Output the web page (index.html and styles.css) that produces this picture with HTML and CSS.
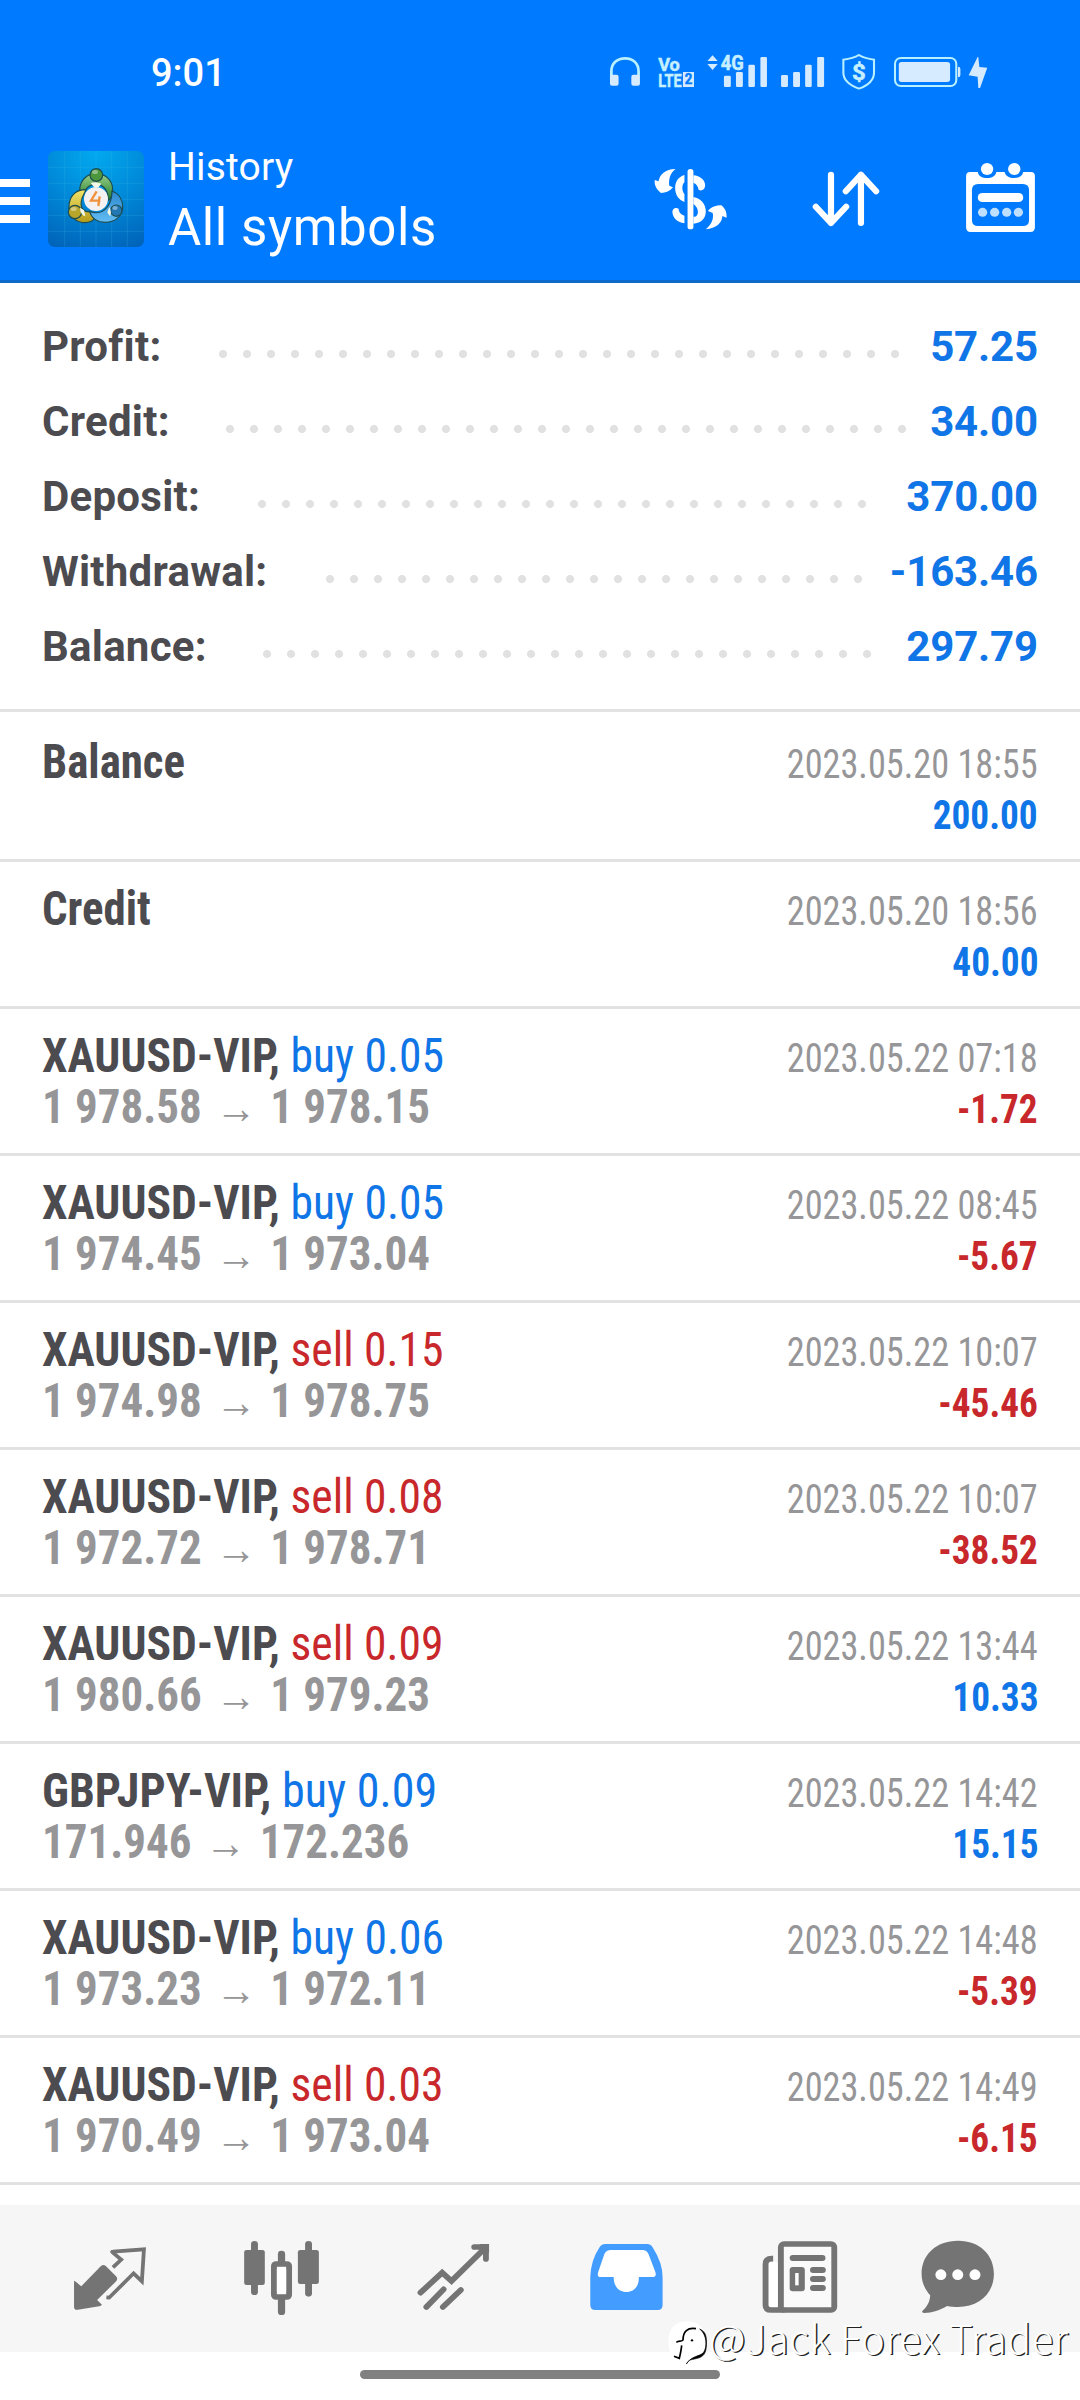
FILE: index.html
```html
<!DOCTYPE html>
<html lang="en">
<head>
<meta charset="utf-8">
<title>History</title>
<link rel="stylesheet" href="styles.css">
</head>
<body>
<div class="screen">
  <header class="top">
    <div class="status">
      <span class="clock">9:01</span>
      <svg class="status-icons" viewBox="174 54 1162 132" preserveAspectRatio="none">
        <g fill="none" stroke="#b9f0ff" stroke-width="8">
          <path d="M207 140V124C207 100 224 85 247 85S286 100 286 124V140"/>
          <path d="M926 75C912 84 898 87 881 89V128C881 152 900 166 926 176C952 166 970 152 970 128V89C953 87 940 84 926 75Z" stroke-width="6"/>
          <rect x="1031" y="84" width="178" height="84" rx="17" stroke-width="6"/>
        </g>
        <g fill="#d6ebff">
          <rect x="203" y="134" width="25" height="33" rx="6"/><rect x="265" y="134" width="25" height="33" rx="6"/>
          <path d="M486 93L501 76L516 93ZM486 102L501 120L516 102Z"/>
          <rect x="534" y="137" width="20" height="34" rx="4"/><rect x="569" y="126" width="20" height="45" rx="4"/><rect x="605" y="104" width="19" height="67" rx="4"/><rect x="640" y="81" width="19" height="90" rx="4"/>
          <rect x="700" y="135" width="20" height="36" rx="4"/><rect x="735" y="126" width="20" height="45" rx="4"/><rect x="770" y="104" width="19" height="67" rx="4"/><rect x="805" y="81" width="20" height="90" rx="4"/>
          <rect x="1042" y="96" width="149" height="60" rx="8"/>
          <path d="M1214 110Q1221 110 1221 117V135Q1221 142 1214 142Z"/>
          <path d="M1271 81L1245 136L1271 140L1273 174H1278L1299 113L1276 111L1273 81Z"/>
          <rect x="415" y="126" width="32" height="45"/>
        </g>
        <g class="glyphs">
          <text x="343" y="122" font-size="57" textLength="63" lengthAdjust="spacingAndGlyphs">Vo</text>
          <text x="343" y="170" font-size="57" textLength="68" lengthAdjust="spacingAndGlyphs">LTE</text>
          <text x="420" y="163" font-size="42" textLength="22" lengthAdjust="spacingAndGlyphs" class="knock">2</text>
          <text x="525" y="121" font-size="63" textLength="67" lengthAdjust="spacingAndGlyphs">4G</text>
          <text x="906" y="149" font-size="64" textLength="40" lengthAdjust="spacingAndGlyphs">$</text>
        </g>
      </svg>
    </div>
    <div class="toolbar">
      <div class="menu"><i></i><i></i><i></i></div>
      <svg class="app" viewBox="54 62 288 288" preserveAspectRatio="none">
        <defs>
          <radialGradient id="bg" cx=".5" cy="0" r="1.1"><stop offset="0" stop-color="#02aaf0"/><stop offset=".5" stop-color="#0089d8"/><stop offset="1" stop-color="#0062b8"/></radialGradient>
          <linearGradient id="gr" x1="0" y1="0" x2="0" y2="1"><stop offset="0" stop-color="#9bd08a"/><stop offset="1" stop-color="#1f7d2c"/></linearGradient>
          <linearGradient id="ye" x1="0" y1="0" x2="0" y2="1"><stop offset="0" stop-color="#f3e468"/><stop offset="1" stop-color="#b39a1b"/></linearGradient>
          <linearGradient id="bl" x1="0" y1="0" x2="0" y2="1"><stop offset="0" stop-color="#2b86d0"/><stop offset="1" stop-color="#63bdf2"/></linearGradient>
        </defs>
        <rect x="54" y="62" width="288" height="288" rx="20" fill="url(#bg)"/>
        <path d="M104 62V350M151 62V350M198 62V350M245 62V350M292 62V350M54 111H342M54 159H342M54 207H342M54 255H342M54 303H342" stroke="#48bdf0" stroke-opacity=".2" stroke-width="3"/>
        <g stroke="#1d4c50" stroke-width="3.5">
          <path d="M149 180C150 148 172 130 199 130C228 130 248 152 248 178C248 196 240 208 234 210C236 180 220 162 198 162C182 162 170 170 164 184Z" fill="url(#gr)"/>
          <path d="M168 178C132 178 117 202 117 230C117 258 138 277 166 277C180 276 188 272 192 266L180 245C158 245 148 230 156 204Z" fill="url(#ye)"/>
          <path d="M246 182C268 190 278 210 278 230C276 260 254 276 226 276C202 276 186 266 178 243C202 252 218 248 232 230C244 214 246 200 246 182Z" fill="url(#bl)"/>
          <circle cx="199" cy="134" r="19" fill="#4c963d"/>
          <circle cx="135" cy="245" r="20" fill="#b8a62a"/>
          <circle cx="259" cy="241" r="17" fill="#2378b4"/>
        </g>
        <g fill="#fff" fill-opacity=".4"><ellipse cx="195" cy="125" rx="9" ry="6"/><ellipse cx="131" cy="236" rx="9" ry="6"/><ellipse cx="255" cy="233" rx="8" ry="6"/></g>
        <path d="M182 158L192 170H206L214 160Q198 152 182 158ZM150 232L162 240L166 258Q150 252 150 232ZM238 230L232 246L240 258Q246 244 238 230Z" fill="#f4f8e8"/>
        <circle cx="198" cy="206" r="36" fill="#f3f1f1"/>
        <path d="M200 183L183 211H211M209 198L205 227" fill="none" stroke="#f0923d" stroke-width="7"/>
      </svg>
      <div class="titles">
        <div class="sub">History</div>
        <div class="main">All symbols</div>
      </div>
      <div class="actions">
        <svg width="80" height="75" viewBox="321 390 232 225" preserveAspectRatio="none">
          <g fill="#fff">
            <rect x="427" y="417" width="17" height="181" rx="8"/>
            <path d="M418 435C400 440 391 456 391 474C391 495 402 510 418 516V493C410 482 410 464 418 456Z"/>
            <path d="M444 436C463 437 478 450 478 466C478 478 468 485 459 479C457 469 452 461 444 459V501C466 505 480 522 480 544C480 566 466 580 444 581V560C451 562 457 556 457 546C457 534 451 528 444 522Z"/>
            <path d="M383 547C382 536 392 530 401 536C401 546 409 554 418 557V580C398 577 385 566 383 547Z"/>
            <path d="M392 417C362 417 346 434 343 454L332 450C330 464 336 478 350 489C364 489 376 483 385 472L374 467C372 448 376 430 392 417Z"/>
            <path d="M480 598C510 594 527 580 528 558L540 563C541 548 537 536 525 526C510 526 496 530 486 543L500 549C503 566 498 582 480 598Z"/>
          </g>
        </svg>
        <svg width="72" height="75" viewBox="787 390 209 225" preserveAspectRatio="none">
          <path d="M845 434V579M801 530L845 579L889 530M932 579V434M888 484L932 434L976 484" fill="none" stroke="#fff" stroke-width="18" stroke-linecap="round" stroke-linejoin="round"/>
        </svg>
        <svg width="75" height="75" viewBox="1228 390 218 225" preserveAspectRatio="none">
          <path fill="#fff" fill-rule="evenodd" d="M1249 426H1271C1273 438 1283 444 1298 444S1322 438 1325 426H1349C1352 438 1362 444 1377 444S1401 438 1403 426H1425Q1437 426 1437 438V592Q1437 606 1424 606H1250Q1237 606 1237 592V438Q1237 426 1249 426ZM1272 462Q1254 462 1254 480V570Q1254 588 1272 588H1402Q1420 588 1420 570V480Q1420 462 1402 462Z"/>
          <g fill="#fff"><circle cx="1298" cy="417" r="18"/><circle cx="1377" cy="417" r="18"/><rect x="1271" y="489" width="132" height="27" rx="13"/></g>
          <g fill="#bfdfff"><circle cx="1285" cy="547" r="13.5"/><circle cx="1320" cy="547" r="13.5"/><circle cx="1355" cy="547" r="13.5"/><circle cx="1389" cy="547" r="13.5"/></g>
        </svg>
      </div>
    </div>
  </header>

  <section class="summary">
    <div class="sum"><span class="label">Profit:</span><span class="dots n29" style="margin-right:23px"></span><span class="value">57.25</span></div>
    <div class="sum"><span class="label">Credit:</span><span class="dots n29" style="margin-right:16px"></span><span class="value">34.00</span></div>
    <div class="sum"><span class="label">Deposit:</span><span class="dots n26" style="margin-right:32px"></span><span class="value">370.00</span></div>
    <div class="sum"><span class="label">Withdrawal:</span><span class="dots n23" style="margin-right:20px"></span><span class="value">-163.46</span></div>
    <div class="sum"><span class="label">Balance:</span><span class="dots n26" style="margin-right:27px"></span><span class="value">297.79</span></div>
  </section>

  <main class="deals">
    <article class="deal first"><div class="line"><span class="name op"><b>Balance</b></span><time>2023.05.20 18:55</time></div><div class="line"><span>&nbsp;</span><strong class="up">200.00</strong></div></article>
    <article class="deal"><div class="line"><span class="name op"><b>Credit</b></span><time>2023.05.20 18:56</time></div><div class="line"><span>&nbsp;</span><strong class="up">40.00</strong></div></article>
    <article class="deal"><div class="line"><span class="name"><b>XAUUSD-VIP,</b> <span class="up">buy 0.05</span></span><time>2023.05.22 07:18</time></div><div class="line"><span class="price">1 978.58<i>→</i>1 978.15</span><strong class="down">-1.72</strong></div></article>
    <article class="deal"><div class="line"><span class="name"><b>XAUUSD-VIP,</b> <span class="up">buy 0.05</span></span><time>2023.05.22 08:45</time></div><div class="line"><span class="price">1 974.45<i>→</i>1 973.04</span><strong class="down">-5.67</strong></div></article>
    <article class="deal"><div class="line"><span class="name"><b>XAUUSD-VIP,</b> <span class="down">sell 0.15</span></span><time>2023.05.22 10:07</time></div><div class="line"><span class="price">1 974.98<i>→</i>1 978.75</span><strong class="down">-45.46</strong></div></article>
    <article class="deal"><div class="line"><span class="name"><b>XAUUSD-VIP,</b> <span class="down">sell 0.08</span></span><time>2023.05.22 10:07</time></div><div class="line"><span class="price">1 972.72<i>→</i>1 978.71</span><strong class="down">-38.52</strong></div></article>
    <article class="deal"><div class="line"><span class="name"><b>XAUUSD-VIP,</b> <span class="down">sell 0.09</span></span><time>2023.05.22 13:44</time></div><div class="line"><span class="price">1 980.66<i>→</i>1 979.23</span><strong class="up">10.33</strong></div></article>
    <article class="deal"><div class="line"><span class="name cross"><b>GBPJPY-VIP,</b> <span class="up">buy 0.09</span></span><time>2023.05.22 14:42</time></div><div class="line"><span class="price">171.946<i>→</i>172.236</span><strong class="up">15.15</strong></div></article>
    <article class="deal"><div class="line"><span class="name"><b>XAUUSD-VIP,</b> <span class="up">buy 0.06</span></span><time>2023.05.22 14:48</time></div><div class="line"><span class="price">1 973.23<i>→</i>1 972.11</span><strong class="down">-5.39</strong></div></article>
    <article class="deal"><div class="line"><span class="name"><b>XAUUSD-VIP,</b> <span class="down">sell 0.03</span></span><time>2023.05.22 14:49</time></div><div class="line"><span class="price">1 970.49<i>→</i>1 973.04</span><strong class="down">-6.15</strong></div></article>
  </main>

  <nav class="tabs">
    <svg viewBox="0 75 522.7 441" preserveAspectRatio="none">
      <path fill="#747474" d="M215 302Q222 306 236 319L291 260Q299 250 308 259L337 289Q344 297 336 305L282 360L296 374Q294 378 288 379L226 389Q215 391 215 380Z"/>
      <path fill="none" stroke="#747474" stroke-width="11" stroke-linejoin="miter" stroke-linecap="butt" d="M328 262L352 239L327 217Q324 215 328 215L418 208L412 304L388 280L317 353L309 352"/>
    </svg>
    <svg viewBox="522.7 75 522.7 441" preserveAspectRatio="none">
      <g fill="#747474">
        <rect x="729" y="183" width="20" height="162" rx="10"/><rect x="709" y="210" width="60" height="105" rx="7"/>
        <rect x="886" y="183" width="20" height="167" rx="10"/><rect x="865" y="210" width="61" height="102" rx="7"/>
        <rect x="807" y="212" width="21" height="60" rx="10"/><rect x="807" y="345" width="21" height="60" rx="10"/>
      </g>
      <rect x="795.5" y="252" width="44" height="99" rx="6" fill="#f6f6f6" stroke="#747474" stroke-width="17"/>
      <rect x="804" y="261" width="27" height="81" rx="8" fill="#fff"/>
    </svg>
    <svg viewBox="1045.3 75 522.7 441" preserveAspectRatio="none">
      <path d="M1221 338L1284 278L1311 303L1402 211M1377 201H1411V237M1288 328L1238 381M1338 330L1286 381" fill="none" stroke="#747474" stroke-width="17" stroke-linecap="round"/>
      <path d="M1393 192H1420V219Z" fill="#747474"/>
    </svg>
    <svg viewBox="0 75 522.7 441" preserveAspectRatio="none">
      <path fill="#439cff" d="M190 192H311Q321 192 327 202Q356 249 356 291V374Q356 390 342 390H161Q146 390 146 374V291Q148 240 173 202Q179 192 190 192Z"/>
      <path fill="#fff" d="M206 210H297Q310 210 315 222L335 276Q339 291 330 291H287C288 318 274 336 251 336S213 318 214 291H175Q165 291 169 276L187 222Q192 210 206 210Z"/>
    </svg>
    <svg viewBox="522.7 75 522.7 441" preserveAspectRatio="none">
      <rect x="663" y="246" width="28" height="135" rx="6" fill="#fff"/>
      <rect x="699.5" y="192" width="155" height="198" rx="9" fill="#fafafa" stroke="#747474" stroke-width="17"/>
      <path d="M677 236H673Q655 236 655 253V374Q655 390 671 390H710" fill="none" stroke="#747474" stroke-width="17"/>
      <g fill="#747474"><rect x="725" y="225" width="104" height="18" rx="9"/><rect x="725" y="261" width="44" height="73" rx="9"/><rect x="784" y="261" width="46" height="18" rx="9"/><rect x="784" y="288" width="46" height="18" rx="9"/><rect x="784" y="315" width="46" height="18" rx="9"/></g>
      <rect x="741" y="279" width="10" height="37" fill="#fff"/>
    </svg>
    <svg viewBox="1045.3 75 522.7 441" preserveAspectRatio="none">
      <path fill="#747474" d="M1214 182C1277 182 1318 224 1318 281C1318 340 1275 381 1214 381C1202 381 1192 380 1182 378C1162 390 1139 399 1115 399Q1105 397 1113 390C1126 378 1132 364 1133 346C1118 328 1108 308 1108 281C1108 224 1150 182 1214 182Z"/>
      <g fill="#fff"><circle cx="1164" cy="284" r="16"/><circle cx="1213" cy="284" r="16"/><circle cx="1263" cy="284" r="16"/></g>
    </svg>
  </nav>
  <div class="home"><span></span></div>

  <div class="credit">
    <svg viewBox="83 364 120 132">
      <path fill="#fff" d="M140 365C176 365 196 386 196 424C196 466 182 478 152 482L140 494L126 482C98 482 84 462 84 424C84 388 104 365 140 365Z"/>
      <path d="M178 388C200 404 201 442 190 458C178 472 156 466 138 493C144 482 150 480 162 478C184 474 196 468 198 440C200 410 196 396 178 388Z" stroke="#000" stroke-width="2"/>
      <path d="M167 387C142 382 128 396 128 421C122 427 116 422 108 428M124 437C123 450 120 462 117 476L101 470" fill="none" stroke="#000" stroke-width="5"/>
      <circle cx="155" cy="422" r="3.5"/>
    </svg>
    <span>@Jack Forex Trader</span>
  </div>
</div>
</body>
</html>
```
FILE: styles.css
```css
* { box-sizing: border-box; }
body { margin: 0; font-family: Roboto, "Liberation Sans", sans-serif; background: #fff; }
svg { display: block; flex: none; }
.screen { position: relative; width: 1080px; height: 2400px; overflow: hidden; background: #fff; }

.top { height: 283px; background: #007aff; border-bottom: 3px solid #0f69c9; color: #fff; }
.status { display: flex; justify-content: space-between; height: 140px; padding: 48px 80px 0 151px; }
.clock { font-size: 38px; line-height: 50px; font-weight: 500; }
.status-icons { width: 400px; height: 44px; }
.glyphs { font-family: Roboto, sans-serif; font-weight: 700; fill: #c6f0ff; stroke: #c6f0ff; stroke-width: 1.5; }
.glyphs .knock { fill: #007aff; stroke: #007aff; }
.toolbar { display: flex; align-items: center; height: 118px; padding-right: 42px; }
.menu { display: flex; flex-direction: column; gap: 10px; width: 30px; margin: 4px 18px 0 0; }
.menu i { height: 8px; background: #fff; }
.app { width: 96px; height: 96px; }
.titles { align-self: flex-start; margin: 3px 0 0 24px; white-space: nowrap; }
.sub { font-size: 39px; line-height: 48px; letter-spacing: 0.2px; }
.main { margin-top: 4px; font-size: 51px; line-height: 65px; letter-spacing: 0.6px; }
.actions { display: flex; gap: 80px; margin: 0 0 3px auto; }

.summary { height: 429px; padding: 26px 42px 0; border-bottom: 3px solid #e2e2e2; }
.sum { display: flex; align-items: center; height: 75px; font-size: 42px; line-height: 75px; font-weight: 700; color: #4c4b50; }
.label { letter-spacing: 0.25px; }
.value { color: #1075e6; letter-spacing: -0.15px; }
.dots { height: 24px; margin-left: auto; margin-top: 14px; background: radial-gradient(circle, #e1e1e1 3.6px, transparent 4.4px) 0 0 / 24px 24px; }
.n29 { width: 696px; }
.n26 { width: 624px; }
.n23 { width: 552px; }

.deals { font-family: "Roboto Condensed", Roboto, sans-serif; font-stretch: 75%; font-size: 48px; }
.deal { height: 147px; padding: 21px 42px 0 42px; border-bottom: 3px solid #e2e2e2; }
.deal.first { height: 150px; padding-top: 24px; }
.line { display: flex; justify-content: space-between; align-items: baseline; height: 51px; line-height: 51px; white-space: nowrap; color: #4c4b50; }
.name { transform: scaleX(0.95); transform-origin: left; }
.name.op { transform: scaleX(0.935); }
.name.cross { transform: scaleX(0.96); }
.line time { font-size: 40px; color: #969698; transform: scaleX(0.907); transform-origin: right; }
.line strong { font-size: 40px; font-weight: 700; transform: scaleX(0.932); transform-origin: right; }
.line .up { color: #1075e6; }
.line .down { color: #c8282b; }
.line .price { font-weight: 700; color: #969698; transform: scaleX(0.937); transform-origin: left; }
.price i { display: inline-block; width: 73px; text-align: center; font-style: normal; font-size: 44px; line-height: 40px; }

.tabs { display: flex; height: 147px; margin-top: 20px; background: #f6f6f6; }
.tabs svg { width: 180px; height: 147px; }
.home { padding-top: 18px; }
.home span { display: block; width: 360px; height: 9px; margin: 0 auto; border-radius: 5px; background: #808080; }

.credit { position: absolute; left: 668px; top: 2312px; display: flex; gap: 1px; white-space: nowrap; color: #fff; }
.credit svg { width: 40px; height: 44px; margin-top: 9px; }
.credit span { font: 300 40px/50px "Noto Sans CJK SC", sans-serif; letter-spacing: 0.4px; text-shadow: 1.4px 1.2px 0 #222; }
```
